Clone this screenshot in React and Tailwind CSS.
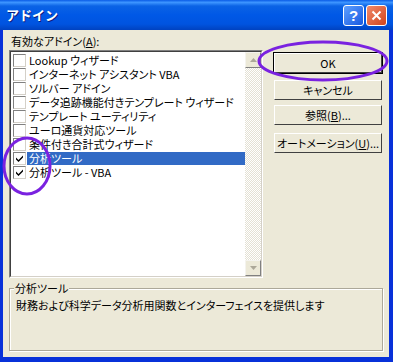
import React from 'react'

const items = [
  { name: 'Lookup ウィザード', checked: false },
  { name: 'インターネット アシスタント VBA', checked: false },
  { name: 'ソルバー アドイン', checked: false },
  { name: 'データ追跡機能付きテンプレート ウィザード', checked: false },
  { name: 'テンプレート ユーティリティ', checked: false },
  { name: 'ユーロ通貨対応ツール', checked: false },
  { name: '条件付き合計式ウィザード', checked: false },
  { name: '分析ツール', checked: true, selected: true },
  { name: '分析ツール - VBA', checked: true },
]

const font = "font-['MS_UI_Gothic','Noto_Sans_CJK_JP',sans-serif] [font-feature-settings:'palt'] text-[11px] leading-[14px] text-black whitespace-nowrap"

function CheckBox({ checked }) {
  return (
    <div className="w-[13px] h-[13px] shrink-0 bg-white border border-t-[#808080] border-l-[#808080] border-r-[#d4d0c8] border-b-[#d4d0c8] flex items-center justify-center">
      {checked && (
        <svg width="9" height="9" viewBox="0 0 9 9">
          <path d="M1 3.5 L3.5 6 L8 1.5 L8 3.5 L3.5 8 L1 5.5 Z" fill="#000" />
        </svg>
      )}
    </div>
  )
}

function Btn({ children, def }) {
  return (
    <div className={'h-[22px] w-[110px] bg-[#ece9d8] flex items-center justify-center border ' + (def ? 'border-black' : 'border-[#ece9d8]')}>
      <div className="w-full h-full flex items-center justify-center border border-t-white border-l-white border-r-[#404040] border-b-[#404040]">
        <span className={font}>{children}</span>
      </div>
    </div>
  )
}

function ScrollArrow({ up }) {
  return (
    <div className="w-[16px] h-[16px] bg-[#ece9d8] border border-t-[#f4f3ee] border-l-[#f4f3ee] border-r-[#808080] border-b-[#808080] flex items-center justify-center">
      <svg width="7" height="4" viewBox="0 0 7 4">
        {up ? <path d="M0 4 L3.5 0 L7 4 Z" fill="#aca899" /> : <path d="M0 0 L3.5 4 L7 0 Z" fill="#aca899" />}
      </svg>
    </div>
  )
}

export default function App() {
  return (
    <div className="relative w-[393px] h-[362px] overflow-hidden bg-[#0831d9] flex flex-col">
      {/* title bar */}
      <div className="h-[30px] shrink-0 flex items-center justify-between pl-[6px] pr-[6px] bg-[linear-gradient(180deg,#0a5ce6_0%,#3d95ff_8%,#0b63e5_20%,#0058e6_50%,#0054e0_80%,#0042c0_100%)]">
        <span className="font-['Noto_Sans_CJK_JP',sans-serif] font-bold text-[13px] text-white [text-shadow:1px_1px_0_#0a1e80]">アドイン</span>
        <div className="flex gap-[2px]">
          <div className="w-[21px] h-[21px] rounded-[3px] border border-white bg-[linear-gradient(135deg,#5fa0ff,#1758e0)] flex items-center justify-center">
            <span className="font-['Liberation_Sans',sans-serif] font-bold text-[15px] leading-none text-white">?</span>
          </div>
          <div className="w-[21px] h-[21px] rounded-[3px] border border-white bg-[linear-gradient(135deg,#f08a6c,#d2441c)] flex items-center justify-center">
            <svg width="11" height="11" viewBox="0 0 11 11">
              <path d="M1.5 1.5 L9.5 9.5 M9.5 1.5 L1.5 9.5" stroke="#fff" strokeWidth="2" />
            </svg>
          </div>
        </div>
      </div>

      {/* body */}
      <div className="flex-1 ml-[3px] mr-[4px] mb-[5px] bg-[#ece9d8] px-[6px] pt-[4px] flex flex-col">
        <div className={font + ' h-[14px] ml-[2px]'}>有効なアドイン(<u>A</u>):</div>
        <div className="flex mt-[2px] gap-[10px]">
          {/* list */}
          <div className="w-[254px] h-[228px] flex border border-t-[#808080] border-l-[#808080] border-r-white border-b-white">
            <div className="flex-1 flex border border-t-[#404040] border-l-[#404040] border-r-[#d4d0c8] border-b-[#d4d0c8]">
              <div className="flex-1 bg-white pt-[1px] pl-[2px] overflow-hidden">
                {items.map((it) => (
                  <div key={it.name} className="h-[14px] flex items-center">
                    <CheckBox checked={it.checked} />
                    <div className={'flex-1 h-[13px] pl-[2px] ml-[1px] flex items-center ' + (it.selected ? 'bg-[#316ac5]' : '')}>
                      <span className={font + (it.selected ? ' !text-white' : '')}>{it.name}</span>
                    </div>
                  </div>
                ))}
              </div>
              <div className="w-[16px] flex flex-col justify-between bg-[image:repeating-conic-gradient(#ffffff_0_25%,#e4e1d4_0_50%)] bg-[length:2px_2px]">
                <ScrollArrow up />
                <ScrollArrow />
              </div>
            </div>
          </div>
          {/* buttons */}
          <div className="flex flex-col pt-[2px]">
            <Btn def>OK</Btn>
            <div className="mt-[5px]"><Btn>キャンセル</Btn></div>
            <div className="mt-[3px]"><Btn>参照(<u>B</u>)...</Btn></div>
            <div className="mt-[6px]"><Btn>オートメーション(<u>U</u>)...</Btn></div>
          </div>
        </div>

        {/* group box */}
        <div className="relative mt-[10px] h-[63px] border border-[#aca899] shadow-[inset_1px_1px_0_#fff,1px_1px_0_#fff]">
          <span className={font + ' absolute -top-[8px] left-[4px] bg-[#ece9d8] px-[1px]'}>分析ツール</span>
          <div className={font + ' pl-[6px] pt-[9px]'}>財務および科学データ分析用関数とインターフェイスを提供します</div>
        </div>
      </div>

      {/* annotations */}
      <svg className="absolute inset-0 pointer-events-none" width="393" height="362">
        <ellipse cx="323" cy="61" rx="64" ry="19" fill="none" stroke="#7a22e0" strokeWidth="3" />
        <ellipse cx="27" cy="166" rx="23" ry="28" fill="none" stroke="#7a22e0" strokeWidth="3" />
      </svg>
    </div>
  )
}
